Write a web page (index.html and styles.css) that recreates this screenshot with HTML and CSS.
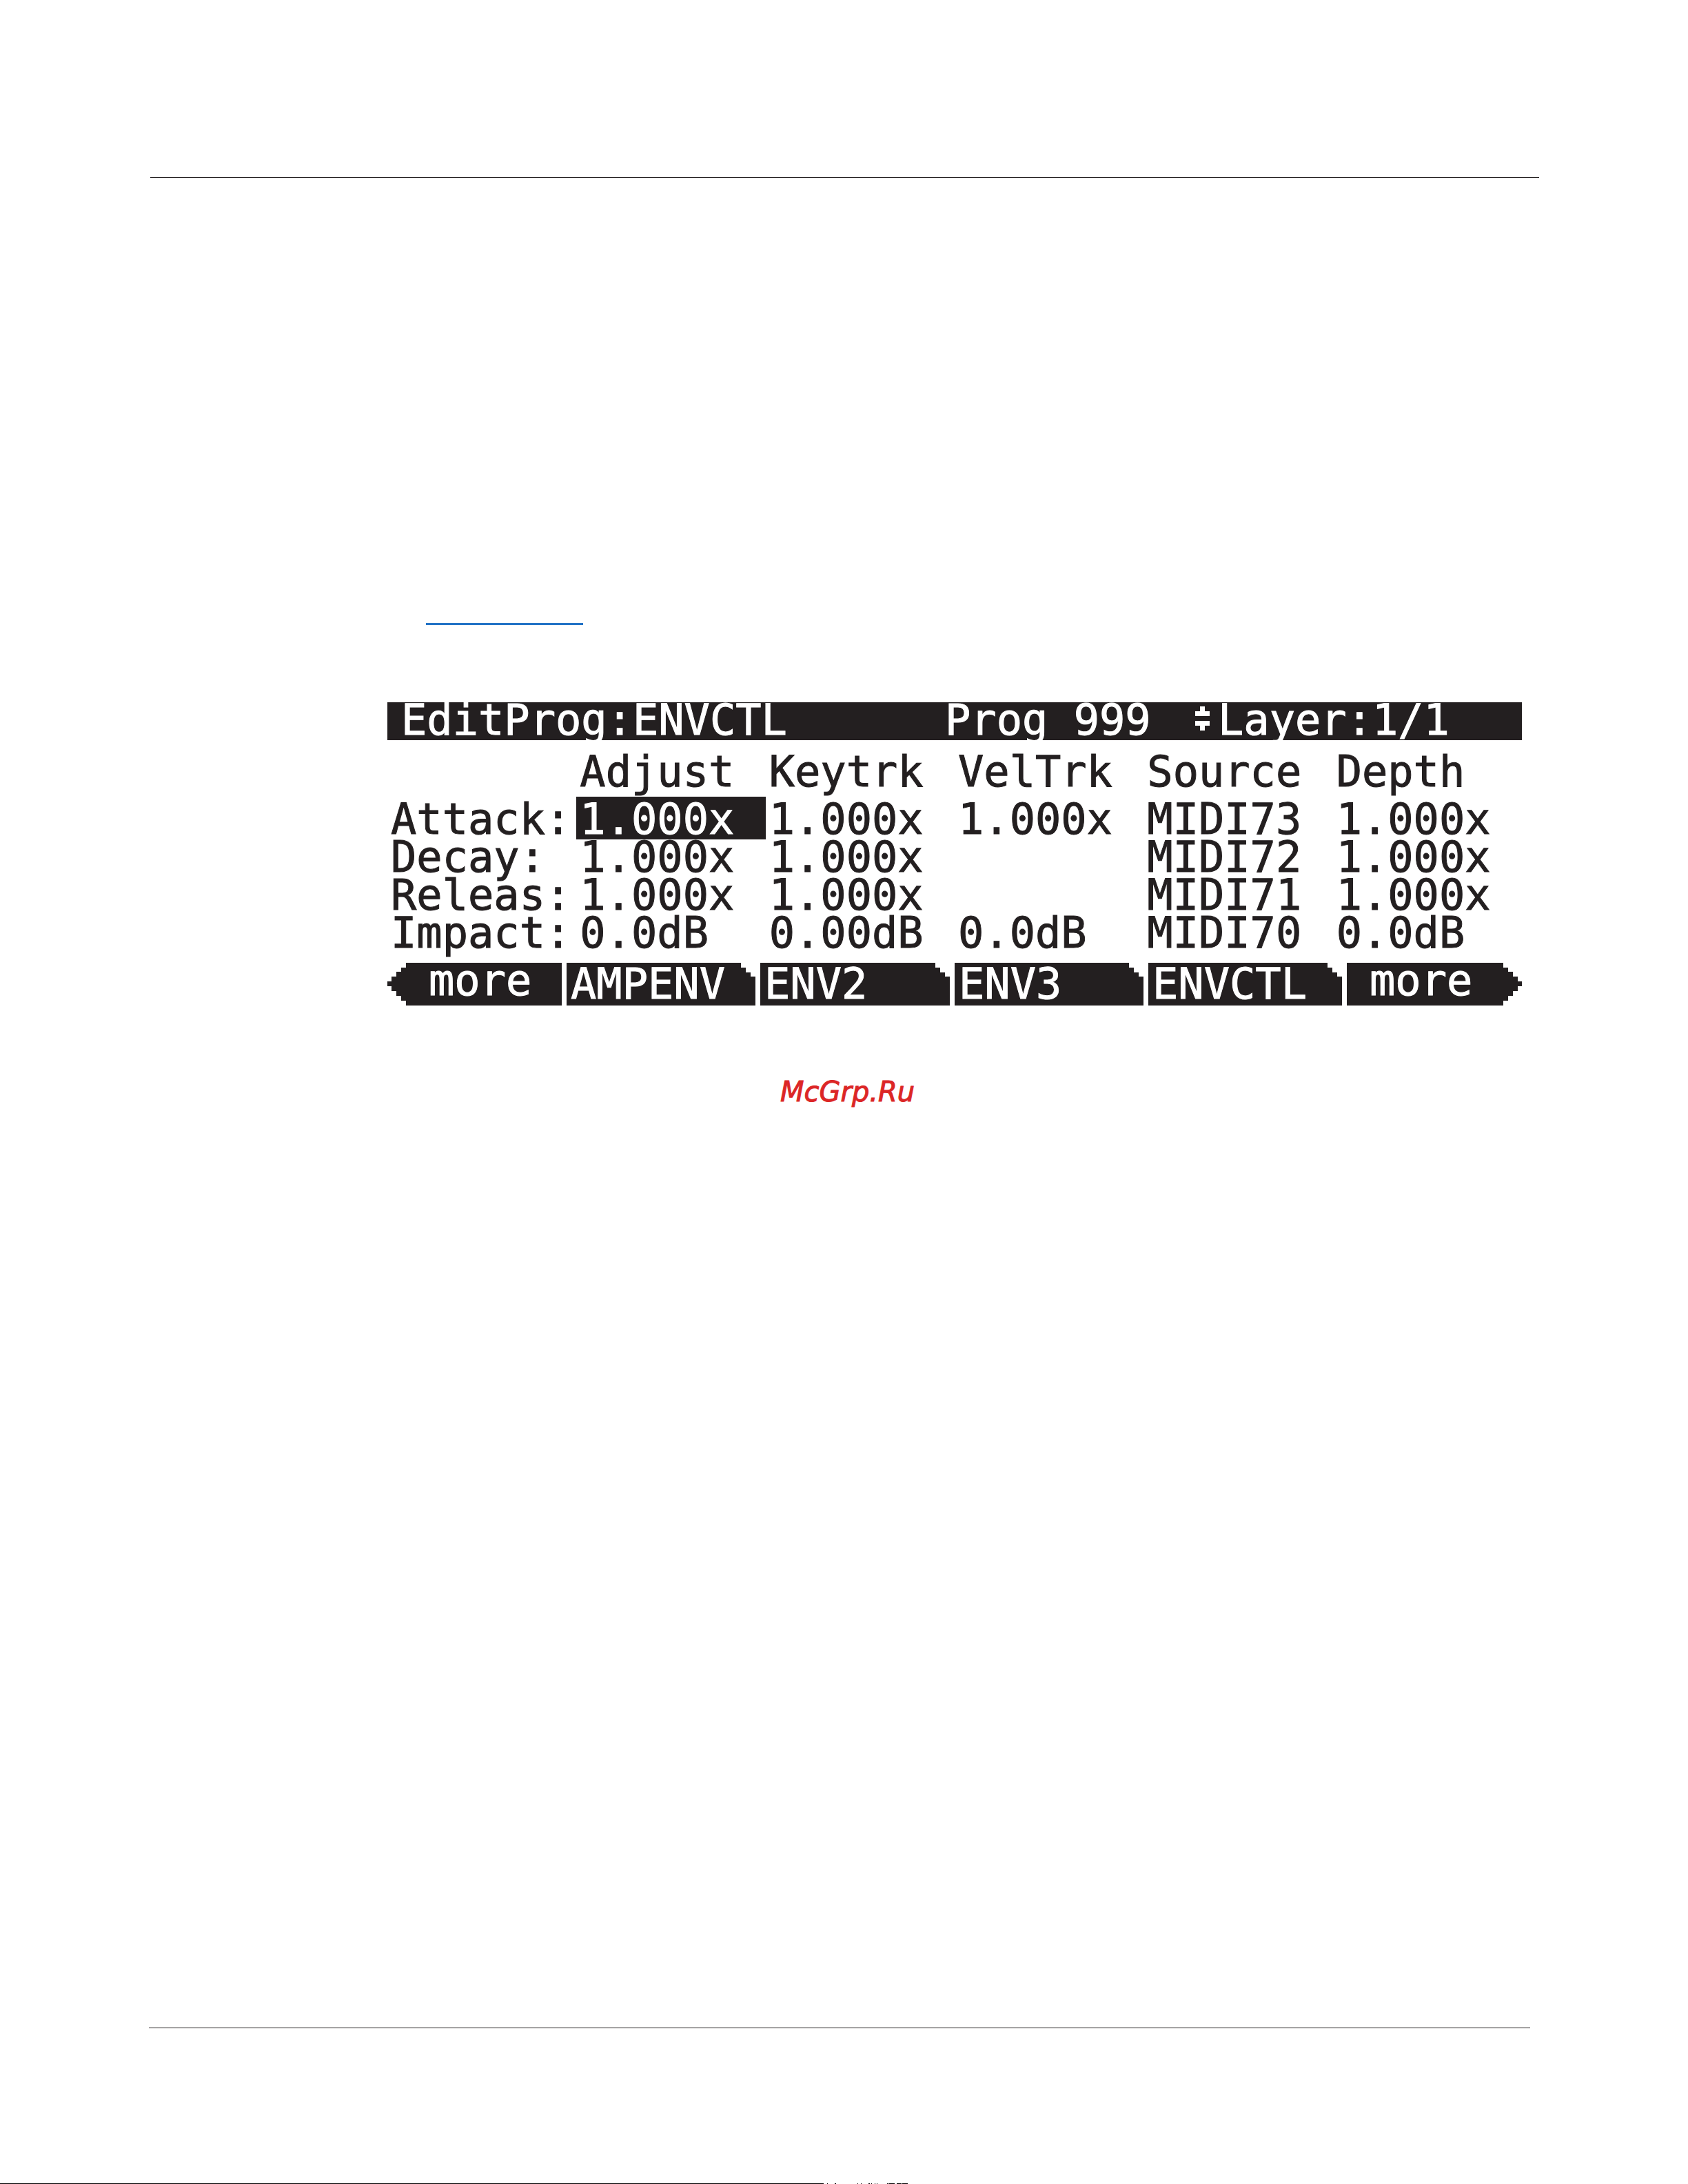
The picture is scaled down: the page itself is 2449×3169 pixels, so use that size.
FILE: index.html
```
<!DOCTYPE html>
<html lang="en">
<head>
<meta charset="utf-8">
<title>EditProg:ENVCTL</title>
<link rel="stylesheet" href="styles.css">
</head>
<body>
<header class="page-head"></header>
<main class="content">
  <a class="ref-link" href="#lcd" aria-label="ENVCTL page"></a>
  <section class="lcd" id="lcd">
    <div class="titlebar">
      <span class="title-name">EditProg:ENVCTL</span>
      <span class="title-prog">Prog 999</span>
      <span class="title-layer">
        <svg class="updown" viewBox="0 0 21 35" aria-hidden="true"><path d="M7 0h7v7h7v7H0V7h7zM0 21h21v7h-7v7H7v-7H0z"/></svg>
        <span>Layer:1/1</span>
      </span>
    </div>
    <table class="params">
      <thead>
        <tr><td></td><th scope="col">Adjust</th><th scope="col">Keytrk</th><th scope="col">VelTrk</th><th scope="col">Source</th><th scope="col">Depth</th></tr>
      </thead>
      <tbody>
        <tr class="first"><th scope="row">Attack:</th><td class="selected">1.000x</td><td>1.000x</td><td>1.000x</td><td>MIDI73</td><td>1.000x</td></tr>
        <tr><th scope="row">Decay:</th><td>1.000x</td><td>1.000x</td><td></td><td>MIDI72</td><td>1.000x</td></tr>
        <tr><th scope="row">Releas:</th><td>1.000x</td><td>1.000x</td><td></td><td>MIDI71</td><td>1.000x</td></tr>
        <tr><th scope="row">Impact:</th><td>0.0dB</td><td>0.00dB</td><td>0.0dB</td><td>MIDI70</td><td>0.0dB</td></tr>
      </tbody>
    </table>
    <nav class="softkeys">
      <button class="key more prev" type="button">more</button>
      <button class="key tab" type="button">AMPENV</button>
      <button class="key tab" type="button">ENV2</button>
      <button class="key tab" type="button">ENV3</button>
      <button class="key tab" type="button">ENVCTL</button>
      <button class="key more next" type="button">more</button>
    </nav>
  </section>
</main>
<p class="watermark">McGrp.Ru</p>
<footer class="page-foot"></footer>
<div class="edge">
  <span class="edge-solid"></span>
  <svg class="edge-broken" viewBox="0 0 122 1" aria-hidden="true"><path d="M5 0h1v1H5zM16 0h2v1h-2zM49 0h1v1h-1zM54 0h1v1h-1zM65 0h2v1h-2zM69 0h1v1h-1zM74 0h1v1h-1zM77 0h1v1h-1zM92 0h1v1h-1zM94 0h9v1h-9zM106 0h7v1h-7zM114 0h8v1h-8z"/></svg>
</div>
</body>
</html>
```
FILE: styles.css
```
* { box-sizing: border-box; }

body {
  margin: 0;
  min-height: 100vh;
  display: flex;
  flex-direction: column;
  background: #fff;
  color: #231f20;
  font-family: "DejaVu Sans Mono", monospace;
}

.page-head {
  margin: 257px 216px 0 218px;
  border-top: 1px solid #231f20;
}

.content {
  margin: 646px 241px 0 562px;
}

.ref-link {
  display: block;
  width: 228px;
  height: 3px;
  margin-left: 56px;
  background: #2373c6;
}

.lcd {
  margin-top: 112px;
  font-size: 62px;
  -webkit-text-stroke: 1px currentColor;
}

.titlebar {
  display: grid;
  grid-template-columns: 789fr 363fr 474fr;
  padding-left: 20px;
  height: 55px;
  line-height: 52px;
  background: #231f20;
  color: #fff;
  white-space: pre;
}

.title-layer {
  display: flex;
  gap: 12px;
}

.updown {
  width: 21px;
  height: 35px;
  margin-top: 6px;
  fill: #fff;
}

.params {
  width: 100%;
  table-layout: fixed;
  border-collapse: collapse;
}

.params th,
.params td {
  padding: 0 0 4px 5px;
  height: 55px;
  line-height: 51px;
  font-weight: 400;
  text-align: left;
  vertical-align: top;
  white-space: nowrap;
}

.params thead th,
.params thead td {
  padding-top: 18px;
  padding-bottom: 9px;
  line-height: 55px;
}

.params .first th,
.params .first td {
  padding-top: 4px;
  padding-bottom: 0;
  line-height: 58px;
}

.params .selected {
  background: #231f20;
  color: #fff;
}

.softkeys {
  display: grid;
  grid-template-columns: 253fr 274fr 275fr 274fr 281fr 254fr;
  gap: 7px;
  margin-top: 14px;
}

.key {
  height: 62px;
  padding: 0 0 0 6px;
  border: 0;
  border-radius: 0;
  background: #231f20;
  color: #fff;
  font: inherit;
  text-align: left;
  white-space: nowrap;
}

.tab {
  line-height: 62px;
  clip-path: polygon(0 0, calc(100% - 21px) 0, calc(100% - 21px) 7px, calc(100% - 14px) 7px, calc(100% - 14px) 14px, calc(100% - 7px) 14px, calc(100% - 7px) 20px, 100% 20px, 100% 100%, 0 100%);
}

.more {
  padding-bottom: 10px;
  line-height: 52px;
}

.prev {
  padding-left: 60px;
  clip-path: polygon(27px 0, 100% 0, 100% 100%, 27px 100%, 27px 55px, 20px 55px, 20px 48px, 13px 48px, 13px 41px, 6px 41px, 6px 34px, 0 34px, 0 27px, 6px 27px, 6px 20px, 13px 20px, 13px 13px, 20px 13px, 20px 7px, 27px 7px);
}

.next {
  padding-left: 33px;
  clip-path: polygon(0 0, calc(100% - 27px) 0, calc(100% - 27px) 7px, calc(100% - 20px) 7px, calc(100% - 20px) 13px, calc(100% - 13px) 13px, calc(100% - 13px) 20px, calc(100% - 6px) 20px, calc(100% - 6px) 27px, 100% 27px, 100% 34px, calc(100% - 6px) 34px, calc(100% - 6px) 41px, calc(100% - 13px) 41px, calc(100% - 13px) 48px, calc(100% - 20px) 48px, calc(100% - 20px) 55px, calc(100% - 27px) 55px, calc(100% - 27px) 100%, 0 100%);
}

.watermark {
  margin: 101px 0 0 1132px;
  font: italic 40px/48px "DejaVu Sans", sans-serif;
  color: #dc2626;
  -webkit-text-stroke: 1px currentColor;
}

.page-foot {
  margin: auto 229px 225px 216px;
  border-top: 1px solid #231f20;
}

.edge {
  display: flex;
  height: 1px;
}

.edge-solid {
  width: 1195px;
  background: #000;
}

.edge-broken {
  width: 122px;
  height: 1px;
}
```
